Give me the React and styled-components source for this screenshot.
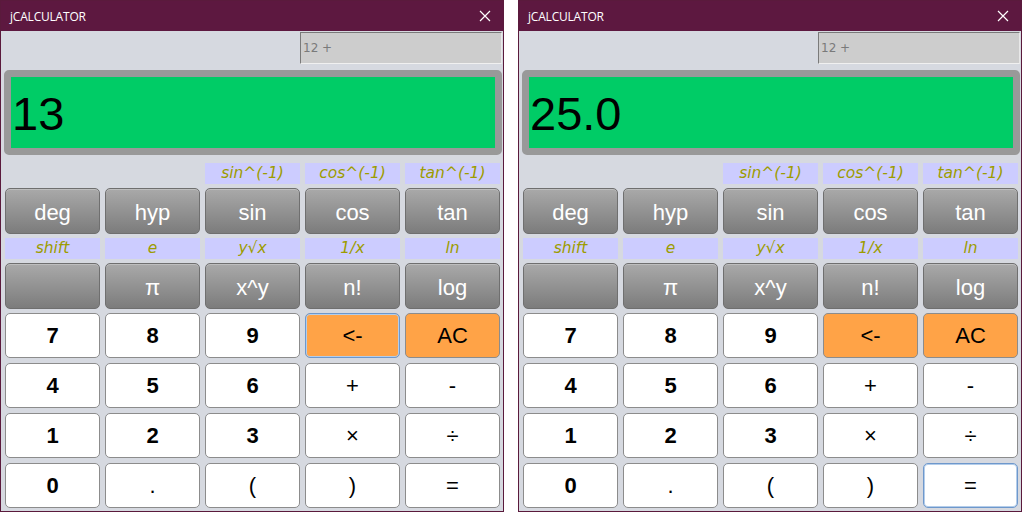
import React from "react";
import styled, { createGlobalStyle } from "styled-components";

const GlobalStyle = createGlobalStyle`
  html, body {
    margin: 0;
    padding: 0;
    background: #ffffff;
  }
  * {
    box-sizing: border-box;
  }
`;

const sciLabels = [
  ["", "", "sin^(-1)", "cos^(-1)", "tan^(-1)"],
  ["shift", "e", "y√x", "1/x", "ln"],
];

const sciKeys = [
  ["deg", "hyp", "sin", "cos", "tan"],
  ["", "π", "x^y", "n!", "log"],
];

const padKeys = [
  [
    { t: "7", v: "digit" },
    { t: "8", v: "digit" },
    { t: "9", v: "digit" },
    { t: "<-", v: "orange" },
    { t: "AC", v: "orange" },
  ],
  [
    { t: "4", v: "digit" },
    { t: "5", v: "digit" },
    { t: "6", v: "digit" },
    { t: "+", v: "op" },
    { t: "-", v: "op" },
  ],
  [
    { t: "1", v: "digit" },
    { t: "2", v: "digit" },
    { t: "3", v: "digit" },
    { t: "×", v: "op" },
    { t: "÷", v: "op" },
  ],
  [
    { t: "0", v: "digit" },
    { t: ".", v: "op" },
    { t: "(", v: "op" },
    { t: ")", v: "op" },
    { t: "=", v: "op" },
  ],
];

const App = () => {
  return (
    <>
      <GlobalStyle />
      <Desktop>
        <CalcWindow value="13" expr="12 +" focusKey="<-" />
        <CalcWindow value="25.0" expr="12 +" focusKey="=" />
      </Desktop>
    </>
  );
};

const CloseIcon = () => (
  <svg width="12" height="12" viewBox="0 0 12 12">
    <path d="M1 1 L11 11 M11 1 L1 11" stroke="#ffffff" strokeWidth="1.2" />
  </svg>
);

const CalcWindow = ({ value, expr, focusKey }) => {
  return (
    <Window>
      <TitleBar>
        <Title>jCALCULATOR</Title>
        <Close>
          <CloseIcon />
        </Close>
      </TitleBar>
      <Body>
        <TopRow>
          <ExprField>{expr}</ExprField>
        </TopRow>
        <DisplayFrame>
          <Screen>{value}</Screen>
        </DisplayFrame>
        <SciGrid>
          {sciLabels.map((labels, r) => (
            <React.Fragment key={r}>
              {labels.map((l, i) => (
                <AltLabel key={"l" + i} $empty={!l}>
                  {l}
                </AltLabel>
              ))}
              {sciKeys[r].map((k, i) => (
                <GrayKey key={"k" + i}>{k}</GrayKey>
              ))}
            </React.Fragment>
          ))}
        </SciGrid>
        <KeyPad>
          {padKeys.flat().map((k) => (
            <Key key={k.t} $variant={k.v} $focused={k.t === focusKey}>
              {k.t}
            </Key>
          ))}
        </KeyPad>
      </Body>
    </Window>
  );
};

const Desktop = styled.div`
  display: flex;
  gap: 14px;
  align-items: flex-start;
`;

const Window = styled.div`
  width: 504px;
  height: 512px;
  border: 1px solid #5a1a3c;
  background: #d6d9e0;
  display: flex;
  flex-direction: column;
`;

const TitleBar = styled.div`
  height: 30px;
  background: #5d1840;
  display: flex;
  align-items: center;
  justify-content: space-between;
  padding: 0 9px 0 9px;
  flex: none;
`;

const Title = styled.span`
  color: #ffffff;
  font-family: "Open Sans", "Noto Sans", sans-serif;
  font-size: 12px;
  letter-spacing: -0.2px;
`;

const Close = styled.span`
  display: flex;
  align-items: center;
  margin-right: 3px;
`;

const Body = styled.div`
  padding: 1px 1px 0 3px;
  display: flex;
  flex-direction: column;
`;

const TopRow = styled.div`
  display: flex;
  justify-content: flex-end;
`;

const ExprField = styled.div`
  width: 202px;
  height: 32px;
  background: #cdcdcd;
  border-top: 1px solid #7a7a7a;
  border-left: 1px solid #7a7a7a;
  border-right: 1px solid #e8e8e8;
  border-bottom: 1px solid #f0f0f0;
  color: #7a7a7a;
  font-family: "DejaVu Sans", sans-serif;
  font-size: 12px;
  line-height: 30px;
  padding-left: 2px;
`;

const DisplayFrame = styled.div`
  margin-top: 6px;
  width: 498px;
  height: 85px;
  border: 7px solid #999999;
  border-radius: 5px;
  background: #999999;
`;

const Screen = styled.div`
  height: 100%;
  background: #00cc66;
  color: #000000;
  font-family: "Liberation Sans", Arial, sans-serif;
  font-size: 47px;
  line-height: 74px;
  padding-left: 1px;
`;

const SciGrid = styled.div`
  margin: 8px 0 0 1px;
  width: 495px;
  display: grid;
  grid-template-columns: repeat(5, 95px);
  grid-template-rows: 21px 46px 21px 46px;
  column-gap: 5px;
  row-gap: 4px;
`;

const AltLabel = styled.div`
  background: ${(p) => (p.$empty ? "transparent" : "#ccccff")};
  color: #9c9c00;
  font-family: "DejaVu Sans", sans-serif;
  font-style: italic;
  font-size: 15.5px;
  line-height: 21px;
  text-align: center;
`;

const GrayKey = styled.div`
  border: 1px solid #6f6f6f;
  border-radius: 5px;
  background: linear-gradient(#a9a9a9, #7c7c7c);
  box-shadow: inset 0 1px 0 rgba(255, 255, 255, 0.25);
  color: #ffffff;
  font-family: "Liberation Sans", Arial, sans-serif;
  font-size: 22px;
  display: flex;
  align-items: center;
  justify-content: center;
  padding-top: 3px;
`;

const keyBg = {
  digit: "#ffffff",
  op: "#ffffff",
  orange: "#ffa347",
};

const Key = styled.div`
  height: 45px;
  border: 1px solid ${(p) => (p.$focused ? "#6e98cc" : "#8c8c8c")};
  box-shadow: ${(p) => (p.$focused ? "inset 0 0 0 1px #b4cdea" : "none")};
  border-radius: 5px;
  background: ${(p) => keyBg[p.$variant]};
  color: #000000;
  font-family: "Liberation Sans", Arial, sans-serif;
  font-size: 22px;
  font-weight: ${(p) => (p.$variant === "digit" ? 700 : 400)};
  display: flex;
  align-items: center;
  justify-content: center;
`;

const KeyPad = styled.div`
  margin: 4px 0 0 1px;
  width: 495px;
  display: grid;
  grid-template-columns: repeat(5, 95px);
  grid-auto-rows: 45px;
  gap: 5px;
`;

export default App;
